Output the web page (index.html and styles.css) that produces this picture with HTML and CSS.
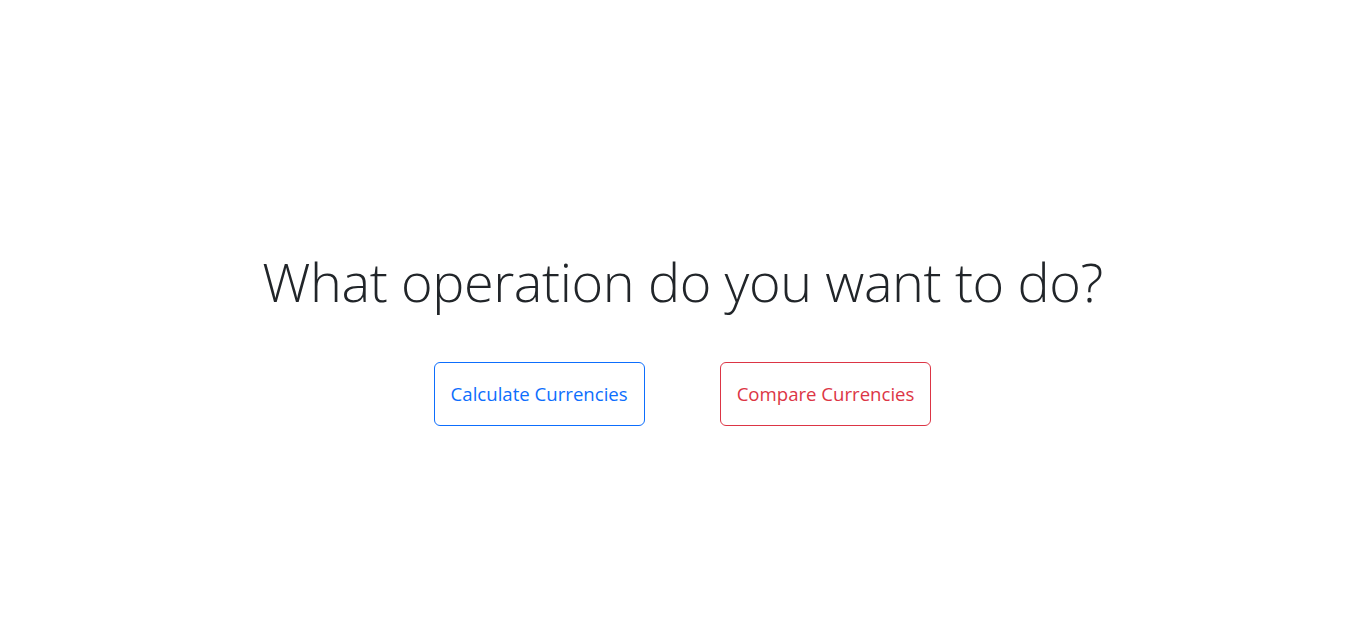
FILE: index.html
```html
<!DOCTYPE html>
<html lang="en">
<head>
<meta charset="utf-8">
<title>Currency Operations</title>
<link rel="stylesheet" href="styles.css">
</head>
<body>
<main class="page">
  <h1 class="title">What operation do you want to do?</h1>
  <div class="actions">
    <button class="btn btn-blue" type="button">Calculate Currencies</button>
    <button class="btn btn-red" type="button">Compare Currencies</button>
  </div>
</main>
</body>
</html>
```

FILE: styles.css
```css
html, body {
  margin: 0;
  padding: 0;
  background: #fff;
}
body {
  font-family: "Open Sans", "Noto Sans", sans-serif;
  color: #212529;
}
.page {
  display: flex;
  flex-direction: column;
  align-items: center;
  padding-top: 249px;
  padding-left: 13px;
}
.title {
  margin: 0;
  font-weight: 300;
  font-size: 54px;
  line-height: 65px;
  color: #212529;
  letter-spacing: -0.4px;
}
.actions {
  display: flex;
  gap: 75px;
  margin-top: 48px;
}
.btn {
  font-family: "Open Sans", "Noto Sans", sans-serif;
  font-size: 18.6px;
  line-height: 28px;
  padding: 17px 16px;
  background: #fff;
  border-radius: 6px;
  border: 1px solid;
  cursor: pointer;
}
.btn-blue {
  color: #0d6efd;
  border-color: #0d6efd;
}
.btn-red {
  color: #dc3545;
  border-color: #dc3545;
}
```
